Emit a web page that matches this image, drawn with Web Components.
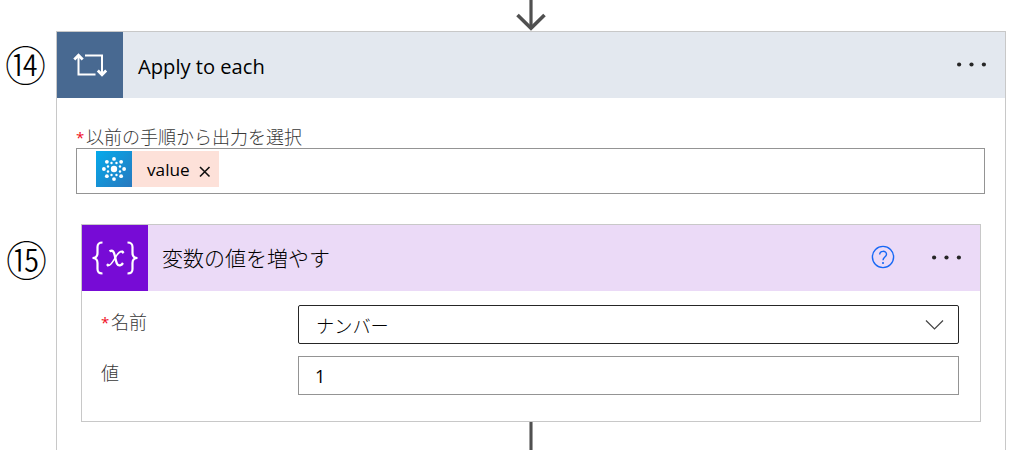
<!DOCTYPE html>
<html lang="ja">
<head>
<meta charset="utf-8">
<title>Apply to each</title>
<style>
  body {
    margin: 0;
    background: #fff;
    color: #000;
    font-family: "Open Sans", "Noto Sans CJK JP", sans-serif;
    overflow: hidden;
  }
</style>
</head>
<body>
<flow-canvas>
  <step-number slot="gutter">⑭</step-number>
  <step-number slot="gutter">⑮</step-number>
  <flow-card kind="loop" title-text="Apply to each">
    <flow-field layout="stacked" label="以前の手順から出力を選択" required>
      <value-token>value</value-token>
    </flow-field>
    <flow-card kind="variable" title-text="変数の値を増やす" help>
      <flow-field label="名前" required dropdown>ナンバー</flow-field>
      <flow-field label="値">1</flow-field>
    </flow-card>
    <flow-line></flow-line>
  </flow-card>
</flow-canvas>

<script>
class FlowCanvas extends HTMLElement {
  connectedCallback() {
    const shadowDOM = this.attachShadow({ mode: "open" });

    shadowDOM.innerHTML = `
    <style>
      :host {
        display: grid;
        grid-template-columns: 56px 950px;
        grid-template-rows: 31px 419px;
        height: 450px;
        overflow: hidden;
      }

      .arrow {
        grid-column: 2;
        display: block;
        margin-left: 458px;
      }

      .gutter {
        grid-column: 1;
        display: flex;
        flex-direction: column;
        gap: 155px;
        padding-top: 12px;
      }
    </style>
    <svg class="arrow" width="34" height="31" viewBox="0 0 34 31" fill="none" stroke="#505050">
      <path d="M17 0V28" stroke-width="3.200"/>
      <path d="M3.500 15L17 28.300L30.500 15" stroke-width="3.600"/>
    </svg>
    <div class="gutter"><slot name="gutter"></slot></div>
    <slot></slot>
    `;
  }
}

class StepNumber extends HTMLElement {
  connectedCallback() {
    const shadowDOM = this.attachShadow({ mode: "open" });

    shadowDOM.innerHTML = `
    <style>
      :host {
        display: block;
        height: 40px;
        padding-left: 5px;
        font: 300 41px/40px "Noto Sans CJK JP", sans-serif;
        white-space: nowrap;
      }

      :host(:nth-of-type(2)) {
        padding-left: 6px;
      }
    </style>
    <slot></slot>
    `;
  }
}

const cardIcons = {
  loop: `
    <svg width="66" height="66" viewBox="0 0 66 66" fill="none" stroke="#fff" stroke-width="2">
      <path d="M28 23.500H45V41M38.500 42.500H21.500V25"/>
      <path d="M17.300 27.500L21.500 23.200L25.700 27.500M40.800 38.500L45 42.700L49.200 38.500" stroke-width="2.800"/>
    </svg>`,
  variable: `
    <svg width="66" height="66" viewBox="0 0 66 66" fill="none" stroke="#fff" stroke-width="2.200">
      <path d="M20.500 17.500C16.500 17.500 15.500 19 15.500 22V28C15.500 31 13.500 33 10.500 33C13.500 33 15.500 35 15.500 38V44C15.500 47 16.500 48.500 20.500 48.500"/>
      <path d="M45.500 17.500C49.500 17.500 50.500 19 50.500 22V28C50.500 31 52.500 33 55.500 33C52.500 33 50.500 35 50.500 38V44C50.500 47 49.500 48.500 45.500 48.500"/>
      <path d="M27.500 26.300C31 24.500 32 27 33 31.500C34.300 37.500 35 41.500 38.500 40.200C39.500 39.800 40.300 39 41 38" stroke-width="2.300"/>
      <path d="M41 26.500C36.500 25.300 34.500 31 32.500 34C30.500 37 28.500 41.500 25.500 40.500" stroke-width="1.500"/>
      <circle cx="40.800" cy="27.200" r="1" fill="#fff" stroke-width="1"/>
      <circle cx="25.800" cy="40" r="1" fill="#fff" stroke-width="1"/>
    </svg>`,
};

class FlowCard extends HTMLElement {
  connectedCallback() {
    const shadowDOM = this.attachShadow({ mode: "open" });
    const kind = this.getAttribute("kind");

    shadowDOM.innerHTML = `
    <style>
      :host {
        display: block;
        box-sizing: border-box;
        border: 1px solid #c8c8c8;
        background: #fff;
      }

      :host([kind="loop"]) {
        --icon: #486991;
        --header: #e3e8ef;
        height: 500px;
      }

      :host([kind="variable"]) {
        --icon: #770bd6;
        --header: #ebdaf7;
        height: 198px;
        margin: 30px 4px 0 5px;
      }

      header {
        display: flex;
        align-items: center;
        height: 66px;
        padding-right: 17px;
        background: var(--header);
      }

      .icon {
        flex: none;
        width: 66px;
        height: 66px;
        background: var(--icon);
      }

      svg {
        display: block;
      }

      h2 {
        flex: 1;
        margin: 1px 0 0 15px;
        font-size: 20.150px;
        font-weight: 400;
        line-height: 30px;
      }

      :host([kind="variable"]) h2 {
        margin: -1px 0 0 14px;
        font-size: 21px;
        font-weight: 300;
      }

      .help {
        margin: -2px 36px 0 0;
      }

      .body {
        display: flex;
        flex-direction: column;
        padding: 28px 20px 0 19px;
      }

      :host([kind="variable"]) .body {
        gap: 12px;
        padding: 14px 21px 0 19px;
      }
    </style>
    <header>
      <div class="icon">${cardIcons[kind]}</div>
      <h2>${this.getAttribute("title-text")}</h2>
      ${
        this.hasAttribute("help")
          ? `<svg class="help" width="24" height="24" viewBox="0 0 24 24" fill="none" stroke="#1768f5" stroke-width="1.400">
        <circle cx="12" cy="12" r="10.600"/>
        <path d="M8.700 9.500C8.700 5.300 15.500 5.300 15.500 9.300C15.500 12 12 12.200 12 15.300"/>
        <path d="M11.200 18H12.800" stroke-width="1.800"/>
      </svg>`
          : ""
      }
      <svg width="32" height="6" viewBox="0 0 32 6" fill="#262626">
        <circle cx="3.100" cy="2.500" r="2.100"/>
        <circle cx="15.500" cy="2.500" r="2.100"/>
        <circle cx="27.900" cy="2.500" r="2.100"/>
      </svg>
    </header>
    <div class="body"><slot></slot></div>
    `;
  }
}

class FlowField extends HTMLElement {
  connectedCallback() {
    const shadowDOM = this.attachShadow({ mode: "open" });

    shadowDOM.innerHTML = `
    <style>
      :host {
        display: grid;
        grid-template-columns: 197px 1fr;
        font-size: 18px;
        font-weight: 300;
      }

      :host([layout="stacked"]) {
        grid-template-columns: 1fr;
        grid-template-rows: 22px 46px;
      }

      label {
        display: flex;
        gap: 2px;
        line-height: 34px;
        color: #383838;
      }

      :host([layout="stacked"]) label {
        line-height: 22px;
      }

      .star {
        width: 8px;
        color: #f00c1c;
        font-size: 15px;
        font-weight: 400;
      }

      .box {
        display: flex;
        align-items: center;
        justify-content: space-between;
        box-sizing: border-box;
        height: 39px;
        padding: 0 14px 0 16px;
        border: 1px solid #949494;
        font-weight: 400;
      }

      :host([layout="stacked"]) .box {
        align-items: flex-start;
        height: 46px;
        padding: 2px 19px;
      }

      :host([dropdown]) .box {
        padding: 0 14px 0 17px;
        border-color: #262626;
        border-radius: 2px;
        font-size: 18.200px;
        font-weight: 300;
      }
    </style>
    <label>${this.hasAttribute("required") ? `<span class="star">*</span>` : ""}<span>${this.getAttribute("label")}</span></label>
    <div class="box">
      <span><slot></slot></span>
      ${
        this.hasAttribute("dropdown")
          ? `<svg width="19" height="11" viewBox="0 0 19 11" fill="none" stroke="#444" stroke-width="1.200"><path d="M1 1.500L9.500 10L18 1.500"/></svg>`
          : ""
      }
    </div>
    `;
  }
}

class ValueToken extends HTMLElement {
  connectedCallback() {
    const shadowDOM = this.attachShadow({ mode: "open" });

    // dots of the connector logo sit on two rings round the centre
    const ring = (radius, size, offset) =>
      Array.from({ length: 8 }, (_, i) => {
        const angle = ((i * 45 + offset) * Math.PI) / 180;
        const x = 18 + radius * Math.cos(angle);
        const y = 18 + radius * Math.sin(angle);
        return `<circle cx="${x.toFixed(2)}" cy="${y.toFixed(2)}" r="${size}"/>`;
      }).join("");

    shadowDOM.innerHTML = `
    <style>
      :host {
        display: flex;
        align-items: center;
        width: 123px;
        height: 36px;
        background: #fde1d9;
        font-size: 17.200px;
      }

      svg {
        display: block;
        flex: none;
      }

      .text {
        width: 58px;
        padding: 1px 0 0 15px;
        box-sizing: border-box;
        line-height: 36px;
      }

      .close {
        margin: 6px 0 0 9px;
      }
    </style>
    <svg width="36" height="36" viewBox="0 0 36 36" fill="#fff">
      <defs>
        <linearGradient id="sky" x1="0" y1="0" x2="1" y2="1">
          <stop offset="0" stop-color="#05aaeb"/>
          <stop offset="1" stop-color="#2878be"/>
        </linearGradient>
      </defs>
      <rect width="36" height="36" fill="url(#sky)"/>
      <circle cx="18" cy="18" r="3.200"/>
      ${ring(6.5, 1.2, 22.5)}
      ${ring(10.1, 1.9, 0)}
    </svg>
    <span class="text"><slot></slot></span>
    <svg class="close" width="12" height="12" viewBox="0 0 12 12" fill="none" stroke="#111" stroke-width="1.600"><path d="M1 1L10.500 10.500M10.500 1L1 10.500"/></svg>
    `;
  }
}

class FlowLine extends HTMLElement {
  connectedCallback() {
    const shadowDOM = this.attachShadow({ mode: "open" });

    shadowDOM.innerHTML = `
    <style>
      :host {
        display: block;
        box-sizing: border-box;
        width: 4px;
        height: 60px;
        margin-left: 453px;
        border: solid #a0a0a0;
        border-width: 0 1px;
        background: #505050;
      }
    </style>
    `;
  }
}

customElements.define("flow-canvas", FlowCanvas);
customElements.define("step-number", StepNumber);
customElements.define("flow-card", FlowCard);
customElements.define("flow-field", FlowField);
customElements.define("value-token", ValueToken);
customElements.define("flow-line", FlowLine);
</script>
</body>
</html>
